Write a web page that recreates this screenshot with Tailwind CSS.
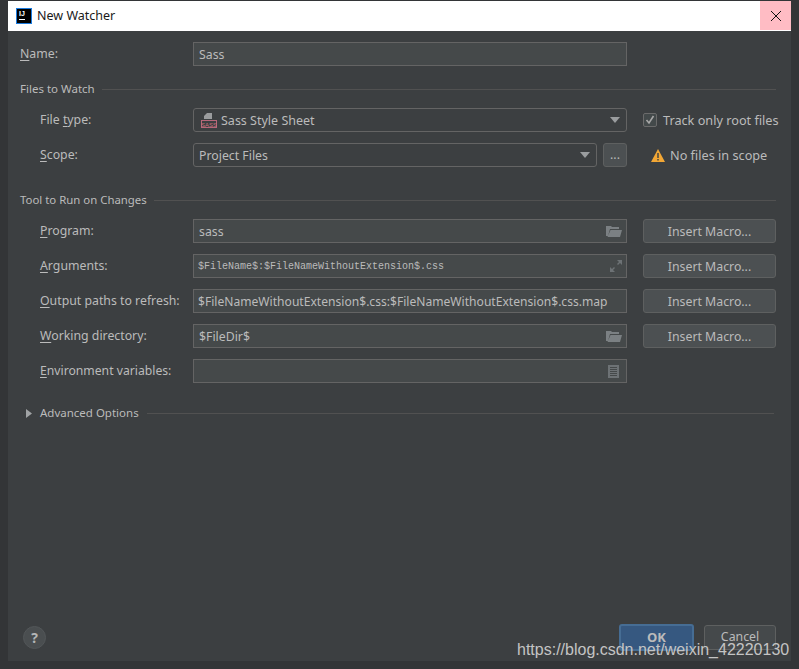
<!DOCTYPE html>
<html lang="en">
<head>
    <meta charset="UTF-8">
    <title>New Watcher</title>
    <script src="https://cdn.jsdelivr.net/npm/@tailwindcss/browser@4"></script>
</head>
<body class="relative w-[799px] h-[669px] overflow-hidden bg-[#333537] pt-px pl-2 font-['Noto_Sans',sans-serif] text-[12.3px] text-[#bbbbbb]">

    <!-- Dialog -->
    <div class="w-[783px] h-[660px] flex flex-col bg-[#3c3f41]">

        <!-- Title bar -->
        <div class="h-[30px] shrink-0 flex items-center bg-white text-[#1a1a1a]">
            <div class="ml-2 w-4 h-4 border border-[#1c7ce0] bg-black flex flex-col items-center text-white font-['Liberation_Sans',sans-serif] font-bold text-[7px] leading-[9px]">
                <span class="self-start pl-[2px]">IJ</span>
                <span class="self-start ml-[2px] mt-[1px] w-[6px] h-px bg-white"></span>
            </div>
            <span class="ml-[5px] text-[12.5px]">New Watcher</span>
            <div class="ml-auto w-[31px] h-[29px] self-start bg-[#ffbcc4] flex items-center justify-center">
                <svg width="12" height="12" viewBox="0 0 12 12" fill="none" stroke="#111" stroke-width="1"><path d="M1 1l10 10M11 1L1 11"/></svg>
            </div>
        </div>

        <!-- Form -->
        <div class="pt-[11px] pl-3 pr-[15px] flex-1 flex flex-col">

            <div class="h-6 flex items-center">
                <label class="w-[173px] shrink-0"><span class="underline underline-offset-2">N</span>ame:</label>
                <div class="w-[434px] shrink-0 h-6 px-[5px] pt-[2px] flex items-center bg-[#45494a] border border-[#646464]">Sass</div>
            </div>

            <div class="mt-[15px] h-4 flex items-center gap-[7px] text-[11.5px]">
                <span>Files to Watch</span>
                <div class="flex-1 h-px bg-[#515151]"></div>
            </div>

            <div class="mt-[11px] h-6 pl-5 flex items-center">
                <label class="w-[153px] shrink-0">File <span class="underline underline-offset-2">t</span>ype:</label>
                <div class="w-[434px] shrink-0 h-6 pl-[7px] pr-[6px] flex items-center bg-[#3c3f41] border border-[#646464] rounded-[3px] text-[12.5px]">
                    <svg width="16" height="16" viewBox="0 0 16 16" class="shrink-0">
                        <path d="M6 1h5v6H3V4z" fill="#9a9c9e"/>
                        <rect x="0.500" y="8.500" width="15" height="7" fill="#3c3f41" stroke="#b8677a"/>
                        <text x="8" y="14.500" text-anchor="middle" font-family="Liberation Sans" font-size="6" fill="#c8707f">SASS</text>
                    </svg>
                    <span class="ml-1 pt-[2px]">Sass Style Sheet</span>
                    <svg width="10" height="6" viewBox="0 0 10 6" class="ml-auto"><path d="M0 0h10L5 6z" fill="#9a9d9f"/></svg>
                </div>
                <div class="ml-4 w-[14px] h-[14px] shrink-0 flex items-center justify-center bg-[#43494a] border border-[#6b6b6b] rounded-[2px]">
                    <svg width="10" height="10" viewBox="0 0 10 10" fill="none" stroke="#a7a7a7" stroke-width="1.6"><path d="M1.500 5l2.500 3 4.500-7"/></svg>
                </div>
                <span class="ml-[6px] pt-[2px] whitespace-nowrap text-[12.7px]">Track only root files</span>
            </div>

            <div class="mt-[11px] h-6 pl-5 flex items-center">
                <label class="w-[153px] shrink-0"><span class="underline underline-offset-2">S</span>cope:</label>
                <div class="w-[404px] shrink-0 h-6 pl-[5px] pr-[6px] flex items-center bg-[#3c3f41] border border-[#646464] rounded-[3px]">
                    <span class="pt-[2px]">Project Files</span>
                    <svg width="10" height="6" viewBox="0 0 10 6" class="ml-auto"><path d="M0 0h10L5 6z" fill="#9a9d9f"/></svg>
                </div>
                <div class="ml-[6px] w-6 h-6 shrink-0 flex items-center justify-center bg-[#4c5052] border border-[#5e6060] rounded-[3px] leading-none">...</div>
                <svg width="14" height="13" viewBox="0 0 14 13" class="ml-6 shrink-0">
                    <path d="M7 0l7 13H0z" fill="#f2a735"/>
                    <path d="M6.300 4h1.400v5H6.300zM6.300 10h1.400v1.500H6.300z" fill="#3c3f41"/>
                </svg>
                <span class="ml-[5px] pt-[2px] whitespace-nowrap text-[12.7px]">No files in scope</span>
            </div>

            <div class="mt-[25px] h-4 flex items-center gap-[7px] text-[11.4px]">
                <span>Tool to Run on Changes</span>
                <div class="flex-1 h-px bg-[#515151]"></div>
            </div>

            <div class="mt-[11px] h-6 pl-5 flex items-center">
                <label class="w-[153px] shrink-0"><span class="underline underline-offset-2">P</span>rogram:</label>
                <div class="w-[434px] shrink-0 h-6 px-[5px] flex items-center bg-[#45494a] border border-[#646464]">
                    <span class="pt-[2px]">sass</span>
                    <svg width="16" height="12" viewBox="0 0 16 12" class="ml-auto mr-[-1px]"><path d="M0 1h5l1 1h7v2H4L2 11H0z M4.500 5H16l-2 7H1.500z" fill="#7b8083"/></svg>
                </div>
                <div class="ml-4 w-[133px] shrink-0 h-6 pt-[2px] flex items-center justify-center bg-[#4c5052] border border-[#5e6060] rounded-[3px]">Insert Macro...</div>
            </div>

            <div class="mt-[11px] h-6 pl-5 flex items-center">
                <label class="w-[153px] shrink-0"><span class="underline underline-offset-2">A</span>rguments:</label>
                <div class="w-[434px] shrink-0 h-6 px-[4px] flex items-center bg-[#45494a] border border-[#646464]">
                    <span class="font-['Liberation_Mono',monospace] text-[10px]">$FileName$:$FileNameWithoutExtension$.css</span>
                    <svg width="12" height="12" viewBox="0 0 12 12" class="ml-auto"><path d="M7 0h5v5l-2-2-2 2-1-1 2-2z M0 7l2 2 2-2 1 1-2 2 2 2H0z" fill="#6d7275"/></svg>
                </div>
                <div class="ml-4 w-[133px] shrink-0 h-6 pt-[2px] flex items-center justify-center bg-[#4c5052] border border-[#5e6060] rounded-[3px]">Insert Macro...</div>
            </div>

            <div class="mt-[11px] h-6 pl-5 flex items-center">
                <label class="w-[153px] shrink-0"><span class="underline underline-offset-2">O</span>utput paths to refresh:</label>
                <div class="w-[434px] shrink-0 h-6 px-[4px] pt-[2px] flex items-center bg-[#45494a] border border-[#646464] whitespace-nowrap text-[12.1px]">$FileNameWithoutExtension$.css:$FileNameWithoutExtension$.css.map</div>
                <div class="ml-4 w-[133px] shrink-0 h-6 pt-[2px] flex items-center justify-center bg-[#4c5052] border border-[#5e6060] rounded-[3px]">Insert Macro...</div>
            </div>

            <div class="mt-[11px] h-6 pl-5 flex items-center">
                <label class="w-[153px] shrink-0"><span class="underline underline-offset-2">W</span>orking directory:</label>
                <div class="w-[434px] shrink-0 h-6 px-[5px] flex items-center bg-[#45494a] border border-[#646464]">
                    <span class="pt-[2px]">$FileDir$</span>
                    <svg width="16" height="12" viewBox="0 0 16 12" class="ml-auto mr-[-1px]"><path d="M0 1h5l1 1h7v2H4L2 11H0z M4.500 5H16l-2 7H1.500z" fill="#7b8083"/></svg>
                </div>
                <div class="ml-4 w-[133px] shrink-0 h-6 pt-[2px] flex items-center justify-center bg-[#4c5052] border border-[#5e6060] rounded-[3px]">Insert Macro...</div>
            </div>

            <div class="mt-[11px] h-6 pl-5 flex items-center">
                <label class="w-[153px] shrink-0 text-[12.2px]"><span class="underline underline-offset-2">E</span>nvironment variables:</label>
                <div class="w-[434px] shrink-0 h-6 px-[5px] flex items-center bg-[#45494a] border border-[#646464]">
                    <svg width="11" height="13" viewBox="0 0 11 13" class="ml-auto mr-[2px]"><path fill-rule="evenodd" d="M0 0h11v13H0z M2 2v1h7V2z M2 4v1h7V4z M2 6v1h7V6z M2 8v1h7V8z M2 10v1h7v-1z" fill="#6d7275"/></svg>
                </div>
            </div>

            <div class="mt-[22px] h-4 pl-[6px] pr-[2px] flex items-center text-[11.5px]">
                <svg width="6" height="9" viewBox="0 0 6 9" class="shrink-0"><path d="M0 0l6 4.500L0 9z" fill="#a0a3a5"/></svg>
                <span class="ml-2">Advanced Options</span>
                <div class="ml-2 flex-1 h-px bg-[#515151]"></div>
            </div>

            <!-- Footer -->
            <div class="mt-auto mb-[10px] flex items-center">
                <div class="ml-[3px] w-[23px] h-[23px] rounded-full bg-[#4a4e50] border border-[#525658] flex items-center justify-center font-bold text-[14px] text-[#b4b6b7]">?</div>
                <div class="ml-auto w-[75px] h-[27px] flex items-center justify-center bg-[#365880] border-2 border-[#466d94] rounded-[3px] font-bold text-[#bbbbbb] text-[13px]">OK</div>
                <div class="ml-[10px] w-[72px] h-[25px] flex items-center justify-center bg-[#45494b] border border-[#5e6060] rounded-[3px]">Cancel</div>
            </div>
        </div>
    </div>

    <!-- Watermark -->
    <div class="absolute left-[517px] top-[640px] font-['Liberation_Sans',sans-serif] text-[16px] leading-5 text-[#c4c4c4] whitespace-nowrap">https://blog.csdn.net/weixin_42220130</div>

</body>
</html>
